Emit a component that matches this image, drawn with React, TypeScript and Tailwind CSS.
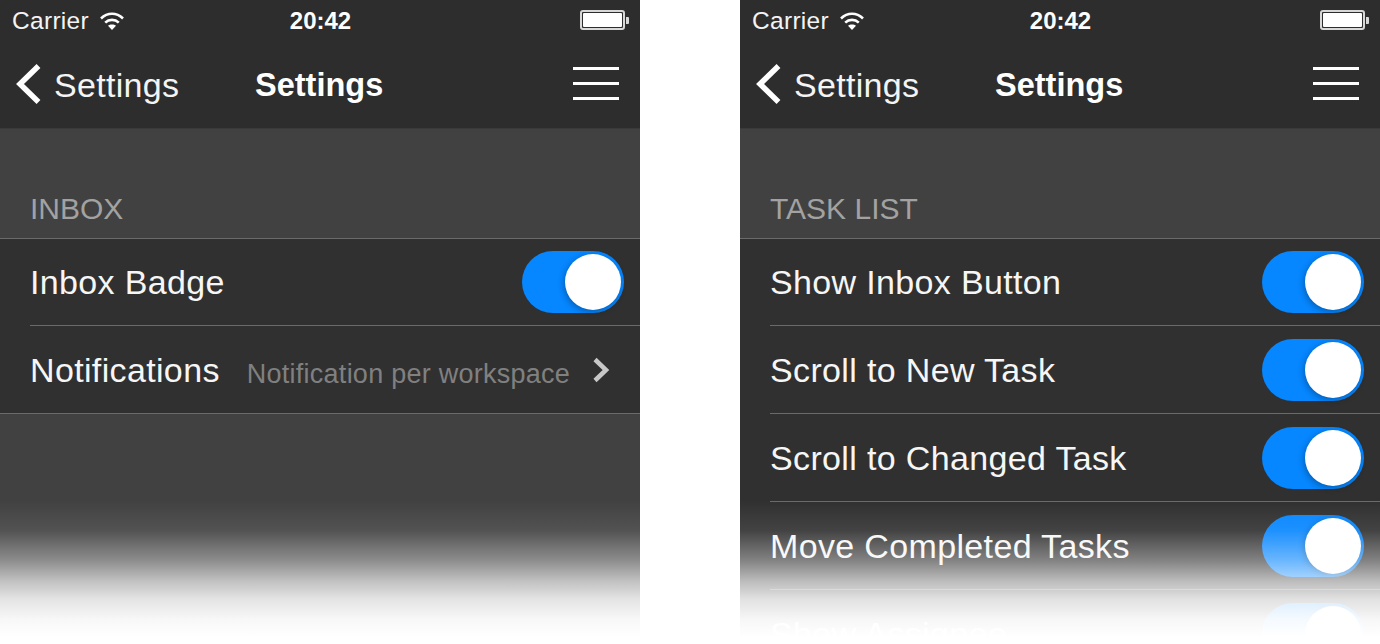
import React from 'react';

const sans = "font-['Liberation_Sans',Arial,sans-serif]";

const Wifi = () => (
  <svg width="24" height="20" viewBox="0 0 24 20" className="ml-[11px] -mt-[1px]">
    <path d="M1 7.5 C7.5 1.2 16.5 1.2 23 7.5" fill="none" stroke="white" strokeWidth="2.6" />
    <path d="M5.2 11.6 C9 8 15 8 18.8 11.6" fill="none" stroke="white" strokeWidth="2.6" />
    <path d="M12 19 L8 14.8 C10 13 14 13 16 14.8 Z" fill="white" />
  </svg>
);

const Battery = () => (
  <div className="flex items-center">
    <div className="w-[45px] h-[20px] rounded-[3px] border-2 border-[#d8d8d8] p-[1px]">
      <div className="h-full w-full bg-white rounded-[1px]" />
    </div>
    <div className="ml-[1px] w-[3px] h-[7px] bg-[#d8d8d8] rounded-r-[1px]" />
  </div>
);

const Toggle = () => (
  <div className="relative w-[102px] h-[62px] rounded-full bg-[#0686ff] shrink-0">
    <div className="absolute right-[3px] top-[3px] w-[56px] h-[56px] rounded-full bg-white shadow-[-1px_2px_6px_rgba(0,0,0,0.3)]" />
  </div>
);

const Row = ({ label, first, last, children }: { label: string; first?: boolean; last?: boolean; children: React.ReactNode }) => (
  <div className="pl-[30px] bg-[#303030]">
    <div className={`flex items-center justify-between pr-[16px] ${first || last ? 'h-[87px]' : 'h-[88px]'} ${last ? '' : 'border-b border-[#6a6a6a]'}`}>
      <span className={`text-[34px] text-[#f6f6f6] tracking-[0.35px] ${first ? '' : 'pt-[1px]'}`}>{label}</span>
      {children}
    </div>
  </div>
);

const Phone = ({ section, children }: { section: string; children: React.ReactNode }) => (
  <div className={`relative w-[640px] h-[644px] overflow-hidden bg-[#414141] ${sans}`}>
    <div className="h-[129px] bg-[#2d2d2d] flex flex-col border-b border-[#3a3a3a]">
      <div className="h-[40px] pl-[12px] pr-[11px] pt-[2px] grid grid-cols-[1fr_auto_1fr] items-center">
        <div className="flex items-center">
          <span className="text-[24.5px] tracking-[0.3px] text-[#f4f4f4]">Carrier</span>
          <Wifi />
        </div>
        <span className="text-[24px] font-semibold text-white">20:42</span>
        <div className="flex justify-end -mt-[2px]">
          <Battery />
        </div>
      </div>
      <div className="flex items-center h-[88px] pl-[15px] pr-[21px]">
        <svg width="26" height="42" viewBox="0 0 26 42">
          <path d="M23.5 3 L5 21 L23.5 39" fill="none" stroke="white" strokeWidth="5.5" />
        </svg>
        <span className="w-[201px] ml-[13px] pt-[2px] text-[34px] tracking-[0.3px] text-[#f4f4f4]">Settings</span>
        <span className="pt-[2px] text-[32.5px] font-bold text-white">Settings</span>
        <div className="ml-auto mb-[2px] w-[46px] flex flex-col gap-[12px]">
          <div className="h-[3px] bg-white" />
          <div className="h-[3px] bg-white" />
          <div className="h-[3px] bg-white" />
        </div>
      </div>
    </div>
    <div className="h-[109px] flex items-end pl-[30px] pb-[11px]">
      <span className="text-[30px] leading-[36px] text-[#a2a2a2]">{section}</span>
    </div>
    <div className="border-t border-b border-[#6a6a6a]">{children}</div>
    <div className="absolute left-0 right-0 top-[500px] h-[144px] bg-[linear-gradient(to_bottom,rgba(255,255,255,0)_0%,rgba(255,255,255,0.09)_21%,rgba(255,255,255,0.4)_42%,rgba(255,255,255,0.67)_56%,rgba(255,255,255,0.86)_69%,rgba(255,255,255,0.96)_83%,#fff_95%)]" />
  </div>
);

export default function App() {
  return (
    <div className="w-[1380px] h-[644px] bg-white flex gap-[100px] overflow-hidden">
      <Phone section="INBOX">
        <Row label="Inbox Badge" first><Toggle /></Row>
        <Row label="Notifications" last>
          <div className="flex items-center">
            <span className="mt-[10px] text-[27px] text-[#808080] mr-[22px] tracking-[0.25px]">Notification per workspace</span>
            <svg width="18" height="26" viewBox="0 0 18 26" className="mr-[14px]">
              <path d="M3 2.5 L14 13 L3 23.5" fill="none" stroke="#c8c8c8" strokeWidth="4.5" />
            </svg>
          </div>
        </Row>
      </Phone>
      <Phone section="TASK LIST">
        <Row label="Show Inbox Button" first><Toggle /></Row>
        <Row label="Scroll to New Task"><Toggle /></Row>
        <Row label="Scroll to Changed Task"><Toggle /></Row>
        <Row label="Move Completed Tasks"><Toggle /></Row>
        <Row label="Show Assignee"><Toggle /></Row>
      </Phone>
    </div>
  );
}
